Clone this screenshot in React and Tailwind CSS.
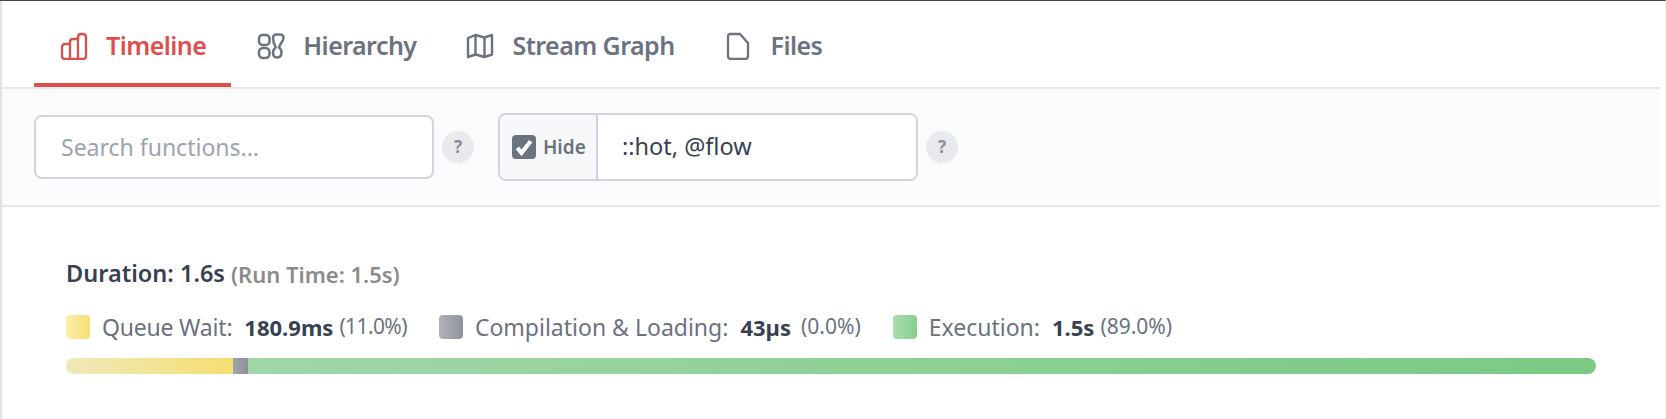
import React from 'react';

function TimelineIcon() {
    return (
        <svg viewBox="0 0 28 28" fill="none" stroke="currentColor" strokeWidth="2.3" strokeLinecap="round" strokeLinejoin="round" className="w-7 h-7 shrink-0">
            <path d="M10 12H5C3 12 2 13 2 15V24C2 26 3 27 5 27H23C25 27 26 26 26 24V5C26 3 25 2 23 2H21C19 2 18 3 18 5V27" />
            <path d="M10 27V10C10 8 11 7 13 7H18" />
        </svg>
    );
}

function HierarchyIcon() {
    return (
        <svg viewBox="0 0 28 28" fill="none" stroke="currentColor" strokeWidth="2.5" strokeLinecap="round" strokeLinejoin="round" className="w-7 h-7 shrink-0">
            <rect x="2" y="3" width="10.500" height="10" rx="3.500" />
            <rect x="2" y="16" width="10.500" height="10" rx="4" />
            <path d="M16 6c0-2 1.500-3.500 3.500-3.500h3.500c2.500 0 3.500 1.500 3.500 3.500 0 3-3 5-4.500 9.500 1.500 1 2.500 2.500 2.500 5 0 3-1.800 5-4.500 5s-4-2-4-5c0-2.500 1.200-4 2.800-5C17 12.500 16 9 16 6z" />
        </svg>
    );
}

function MapIcon() {
    return (
        <svg viewBox="0 0 28 28" fill="none" stroke="currentColor" strokeWidth="2.4" strokeLinecap="round" strokeLinejoin="round" className="w-7 h-7 shrink-0">
            <path d="M2 6 9.500 3 18.500 5.500 26 3V22.500L18.500 25 9.500 22.500 2 25Z" />
            <path d="M9.500 3.500V22.500" />
            <path d="M18.500 5.500V24.500" />
        </svg>
    );
}

function FileIcon() {
    return (
        <svg viewBox="0 0 28 28" fill="none" stroke="currentColor" strokeWidth="2.3" strokeLinecap="round" strokeLinejoin="round" className="w-7 h-7 shrink-0">
            <path d="M5 2H15L23 11V24C23 26 22 27 20 27H6C4 27 3 26 3 24V4C3 3 4 2 5 2Z" />
        </svg>
    );
}

function Tab({ icon, label, active }) {
    return (
        <div className={`h-[86px] pt-2 pl-[26px] flex items-center gap-[18px] border-b-4 ${active ? 'pr-[25px] border-[#dc4f4a] text-[#dc4f4a]' : 'pr-6 border-transparent text-[#6b7280]'}`}>
            {icon}
            <span className="text-[25px] font-semibold tracking-[-0.55px]">{label}</span>
        </div>
    );
}

function Help() {
    return (
        <div className="w-8 h-8 rounded-full bg-[#e9eaed] text-[#8a8f99] text-[17px] font-bold flex items-center justify-center shrink-0">?</div>
    );
}

function Legend({ swatch, label, value, pct, labelClass = '', pctClass = 'ml-1.5' }) {
    return (
        <div className="flex items-center text-[23px] text-[#6b7280]">
            <span className={`w-6 h-6 rounded-[4px] mr-3 ${swatch}`} />
            <span className={labelClass}>{label}</span>
            <span className="ml-3 text-[22px] font-bold text-[#374151]">{value}</span>
            <span className={`text-[21px] ${pctClass}`}>{pct}</span>
        </div>
    );
}

export default function App() {
    return (
        <div className="w-[1666px] h-[419px] bg-white overflow-hidden border-t border-[#444444] border-r border-r-[#f2f2f2] flex font-['Noto_Sans',sans-serif]">
            <div className="w-0.5 bg-[#e2e2e2]" />
            <div className="w-[1658px]">
                <div className="flex pl-8 border-b-2 border-[#e5e7eb] h-[88px]">
                    <Tab icon={<TimelineIcon />} label="Timeline" active />
                    <Tab icon={<HierarchyIcon />} label="Hierarchy" />
                    <Tab icon={<MapIcon />} label="Stream Graph" />
                    <Tab icon={<FileIcon />} label="Files" />
                </div>
                <div className="h-[118px] bg-[#fafbfc] border-b-2 border-[#e5e7eb] pl-8 flex items-center">
                    <div className="w-[400px] h-16 bg-white rounded-lg border-2 border-[#d1d5db] flex items-center pl-[25px] text-[23px] text-[#9ca3af]">Search functions...</div>
                    <div className="ml-2"><Help /></div>
                    <div className="ml-6 w-[420px] h-[68px] rounded-lg border-2 border-[#d1d5db] flex overflow-hidden">
                        <div className="w-[98px] bg-[#f7f8f9] border-r-2 border-[#d1d5db] flex items-center pl-3 gap-[7px]">
                            <span className="w-6 h-6 rounded-[4px] bg-[#6b7280] flex items-center justify-center shrink-0">
                                <svg viewBox="0 0 24 24" fill="none" stroke="white" strokeWidth="5" className="w-5 h-5"><path d="M4 13l5 6L20 5" /></svg>
                            </span>
                            <span className="text-[19px] font-semibold text-[#6b7280]">Hide</span>
                        </div>
                        <div className="flex-1 bg-white flex items-center pl-6 text-[23.5px] text-[#374151]">::hot, @flow</div>
                    </div>
                    <div className="ml-2"><Help /></div>
                </div>
                <div className="pl-16 pr-[64px]">
                    <div className="mt-[49px] h-9 flex items-center text-[23.5px] font-semibold text-[#374151]">
                        Duration: 1.6s
                        <span className="ml-1.5 text-[22px] text-[#8b8b8b]">(Run Time: 1.5s)</span>
                    </div>
                    <div className="mt-[21px] h-7 flex items-center gap-8">
                        <Legend swatch="bg-gradient-to-r from-[#fbeeaa] to-[#f6df70]" label="Queue Wait:" value="180.9ms" pct="(11.0%)" labelClass="tracking-[-0.2px]" pctClass="ml-1.5 tracking-[-0.6px]" />
                        <Legend swatch="bg-gradient-to-r from-[#b0b3bb] to-[#90939d]" label="Compilation & Loading:" value="43µs" pct="(0.0%)" pctClass="ml-2.5" />
                        <Legend swatch="bg-gradient-to-r from-[#a9dcae] to-[#85cf8e]" label="Execution:" value="1.5s" pct="(89.0%)" />
                    </div>
                    <div className="mt-[17px] h-4 w-[1530px] rounded-full overflow-hidden flex">
                        <div className="w-[167px] bg-gradient-to-r from-[#efe8b8] to-[#f6df70]" />
                        <div className="w-[15px] bg-gradient-to-r from-[#a2a5ad] to-[#8d909a]" />
                        <div className="flex-1 bg-gradient-to-r from-[#a1d6a8] to-[#79ca83]" />
                    </div>
                </div>
            </div>
        </div>
    );
}
